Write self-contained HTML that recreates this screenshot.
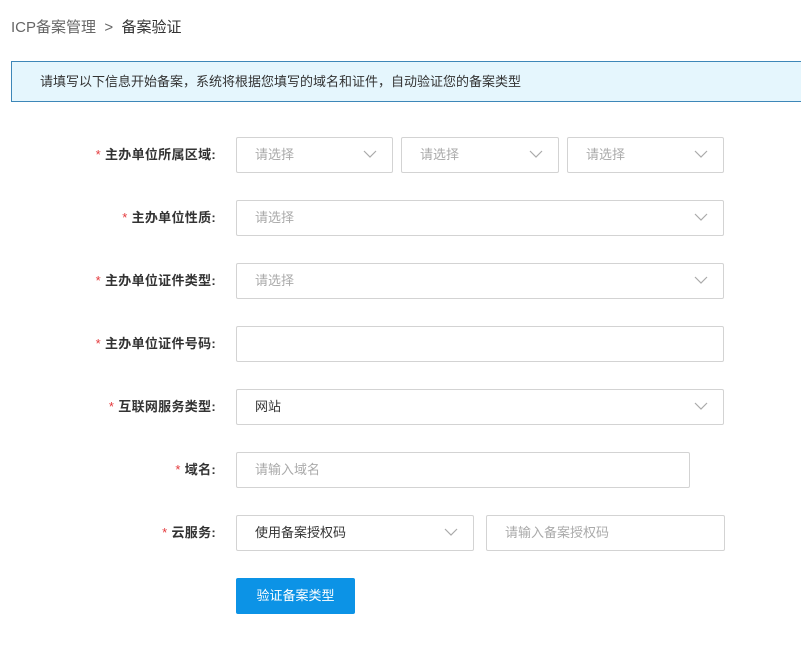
<!DOCTYPE html>
<html><head><meta charset="utf-8"><style>
body{margin:0;width:801px;height:645px;background:#fff;font-family:"Liberation Sans","Noto Sans CJK SC",sans-serif;position:relative;overflow:hidden}
.a{position:absolute}
.bc{left:11px;top:18px;font-size:15px;color:#666;line-height:20px}
.bc b{font-weight:normal;color:#333}
.ban{left:11px;top:61px;width:800px;height:41px;border:1px solid #3d87b8;background:#e5f6fd;box-sizing:border-box;font-size:13px;color:#333;line-height:40px;padding-left:28px}
.lbl{width:216px;left:0;text-align:right;font-size:13px;font-weight:bold;color:#333;line-height:36px;letter-spacing:0.3px}
.lbl i{color:#e4393c;font-style:normal;font-weight:normal;margin-right:4px}
.f{height:36px;border:1px solid #d3d3d3;border-radius:2px;box-sizing:border-box;font-size:13px;color:#aaa;line-height:34px;padding-left:18px}
.f.v{color:#333}
.f svg{position:absolute;right:15px;top:12px}
.btn{left:236px;top:578px;width:119px;height:36px;background:#0c93e6;border-radius:2px;color:#fff;font-size:13px;line-height:36px;text-align:center}
</style></head><body>
<div class="a bc">ICP备案管理 &nbsp;&gt;&nbsp; <b>备案验证</b></div>
<div class="a ban">请填写以下信息开始备案，系统将根据您填写的域名和证件，自动验证您的备案类型</div>

<div class="a lbl" style="top:137px"><i>*</i>主办单位所属区域:</div>
<div class="a f" style="left:236px;top:137px;width:157px">请选择<svg width="14" height="9"><path d="M1 1l6 6 6-6" fill="none" stroke="#aaa" stroke-width="1.2"/></svg></div>
<div class="a f" style="left:401px;top:137px;width:158px">请选择<svg width="14" height="9"><path d="M1 1l6 6 6-6" fill="none" stroke="#aaa" stroke-width="1.2"/></svg></div>
<div class="a f" style="left:567px;top:137px;width:157px">请选择<svg width="14" height="9"><path d="M1 1l6 6 6-6" fill="none" stroke="#aaa" stroke-width="1.2"/></svg></div>

<div class="a lbl" style="top:200px"><i>*</i>主办单位性质:</div>
<div class="a f" style="left:236px;top:200px;width:488px">请选择<svg width="14" height="9"><path d="M1 1l6 6 6-6" fill="none" stroke="#aaa" stroke-width="1.2"/></svg></div>

<div class="a lbl" style="top:263px"><i>*</i>主办单位证件类型:</div>
<div class="a f" style="left:236px;top:263px;width:488px">请选择<svg width="14" height="9"><path d="M1 1l6 6 6-6" fill="none" stroke="#aaa" stroke-width="1.2"/></svg></div>

<div class="a lbl" style="top:326px"><i>*</i>主办单位证件号码:</div>
<div class="a f" style="left:236px;top:326px;width:488px"></div>

<div class="a lbl" style="top:389px"><i>*</i>互联网服务类型:</div>
<div class="a f v" style="left:236px;top:389px;width:488px">网站<svg width="14" height="9"><path d="M1 1l6 6 6-6" fill="none" stroke="#aaa" stroke-width="1.2"/></svg></div>

<div class="a lbl" style="top:452px"><i>*</i>域名:</div>
<div class="a f" style="left:236px;top:452px;width:454px">请输入域名</div>

<div class="a lbl" style="top:515px"><i>*</i>云服务:</div>
<div class="a f v" style="left:236px;top:515px;width:238px">使用备案授权码<svg width="14" height="9"><path d="M1 1l6 6 6-6" fill="none" stroke="#aaa" stroke-width="1.2"/></svg></div>
<div class="a f" style="left:486px;top:515px;width:239px">请输入备案授权码</div>

<div class="a btn">验证备案类型</div>
</body></html>
